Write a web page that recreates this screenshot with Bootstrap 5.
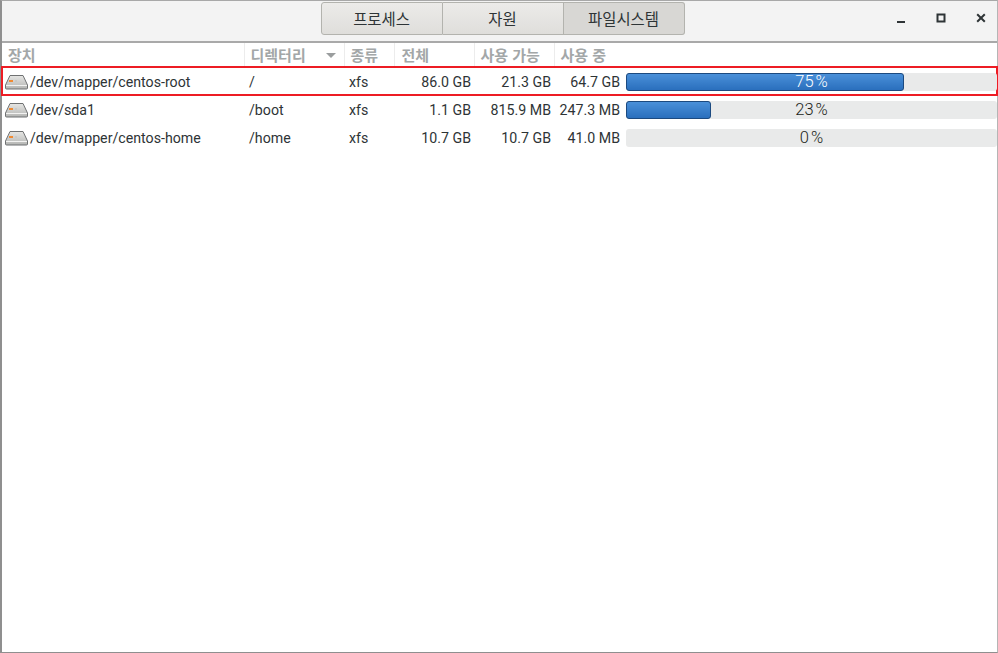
<!DOCTYPE html>
<html lang="ko">
<head>
    <meta charset="UTF-8">
    <meta name="viewport" content="width=device-width, initial-scale=1.0">
    <title>시스템 감시</title>
    <link href="https://cdn.jsdelivr.net/npm/bootstrap@5.3.0/dist/css/bootstrap.min.css" rel="stylesheet">
    <style>
        html, body { height: 100%; overflow: hidden; }
        body { font-family: "Roboto", "Noto Sans CJK KR", sans-serif; font-size: 14.2px; color: #2e3436; background: #fff; }
        .app-window { height: 653px; border: 1px solid #a8a8a8; border-left: 2px solid #8f8f8f; border-right-color: #b5b5b5; border-bottom-color: #8f8f8f; }
        .title-bar { height: 42px; background: #f3f3f3; border-bottom: 2px solid #a9a9a9; padding-top: 1px; padding-left: 6px; }
        .tab-group { width: 364px; height: 33px; }
        .tab-item { flex: 1 1 0; border: 1px solid #b3b3ae; border-radius: 0; background: linear-gradient(#ecebe9, #dfdedb); color: #2e3436; font-family: "Noto Sans CJK KR", sans-serif; font-size: 15.4px; line-height: 1; padding: 0; }
        .tab-item + .tab-item { border-left: 0; }
        .tab-item:first-child { border-radius: 3px 0 0 3px; }
        .tab-item:last-child { border-radius: 0 3px 3px 0; }
        .tab-item.is-on { background: #d8d7d4; }
        .win-btns { right: -4px; top: 4px; }
        .win-btn { width: 40px; height: 24px; background: none; border: 0; padding: 0; }
        .disk-table { table-layout: fixed; width: 100%; border-collapse: collapse; }
        .disk-table th { height: 24px; padding: 0 0 0 6px; font-family: "Noto Sans CJK KR", sans-serif; font-weight: 700; font-size: 15px; color: #a3a7a8; border-right: 1px solid #ececec; white-space: nowrap; }
        .disk-table th.th-total { padding-left: 7px; }
        .disk-table th.th-plain { border-right: 0; }
        .disk-table td { height: 28px; padding: 4px 3px 0 5px; white-space: nowrap; vertical-align: middle; }
        .disk-table td.num { text-align: right; }
        .disk-table td.num-last { padding-right: 4px; }
        .disk-table td.dev-cell { padding-left: 4px; }
        .disk-table td.bar-cell { padding: 2px 0 0 2px; }
        .sel-row { outline: 2px solid #ed1c24; outline-offset: -1px; }
        .dev-icon { width: 23px; height: 16px; margin: 0 2px 0 -1px; vertical-align: -3px; }
        .sort-mark { width: 0; height: 0; border-left: 5px solid transparent; border-right: 5px solid transparent; border-top: 5px solid #9a9d9e; }
        .use-track { height: 18px; background: #e9eaea; border-radius: 3px; }
        .use-fill { height: 18px; background: linear-gradient(#4a90d9, #2a6fbd); border: 1px solid #1c4a80; border-radius: 3px; }
        .use-label { left: 0; right: 0; top: 0; line-height: 18px; text-align: center; font-weight: 300; font-size: 16.5px; word-spacing: -2px; color: #1c1f20; }
        .use-label.on-fill { color: #fff; }
    </style>
</head>
<body>
    <div class="app-window d-flex flex-column">
        <div class="title-bar position-relative d-flex justify-content-center align-items-start flex-shrink-0">
            <div class="tab-group d-flex" role="group">
                <button type="button" class="btn tab-item">프로세스</button>
                <button type="button" class="btn tab-item">자원</button>
                <button type="button" class="btn tab-item is-on">파일시스템</button>
            </div>
            <div class="win-btns position-absolute d-flex">
                <button type="button" class="win-btn" aria-label="최소화">
                    <svg width="10" height="10" viewBox="0 0 10 10"><rect x="1" y="8" width="8" height="2" fill="#2e3436"/></svg>
                </button>
                <button type="button" class="win-btn" aria-label="최대화">
                    <svg width="10" height="10" viewBox="0 0 10 10"><rect x="1.5" y="1.5" width="7" height="7" fill="none" stroke="#2e3436" stroke-width="2"/></svg>
                </button>
                <button type="button" class="win-btn" aria-label="닫기">
                    <svg width="10" height="10" viewBox="0 0 10 10"><path d="M1.2 1.2l7.6 7.6M8.8 1.2l-7.6 7.6" stroke="#2e3436" stroke-width="2"/></svg>
                </button>
            </div>
        </div>

        <table class="disk-table">
            <colgroup>
                <col style="width:242px"><col style="width:100px"><col style="width:50px"><col style="width:80px"><col style="width:80px"><col style="width:70px"><col>
            </colgroup>
            <thead>
                <tr>
                    <th>장치</th>
                    <th><div class="d-flex align-items-center justify-content-between pe-2">디렉터리<span class="sort-mark"></span></div></th>
                    <th>종류</th>
                    <th class="th-total">전체</th>
                    <th>사용 가능</th>
                    <th class="th-plain">사용 중</th>
                    <th class="th-plain"></th>
                </tr>
            </thead>
            <tbody id="diskRows"></tbody>
        </table>
    </div>

    <script>
        const disks = [
            { dev: "/dev/mapper/centos-root", dir: "/", type: "xfs", total: "86.0 GB", free: "21.3 GB", used: "64.7 GB", pct: 75 },
            { dev: "/dev/sda1", dir: "/boot", type: "xfs", total: "1.1 GB", free: "815.9 MB", used: "247.3 MB", pct: 23 },
            { dev: "/dev/mapper/centos-home", dir: "/home", type: "xfs", total: "10.7 GB", free: "10.7 GB", used: "41.0 MB", pct: 0 },
        ];

        const driveIcon = `<svg class="dev-icon" viewBox="0 0 23 16">
            <defs><linearGradient id="driveBody" x1="0" y1="0" x2="0" y2="1"><stop offset="0" stop-color="#e6e6e4"/><stop offset="1" stop-color="#b4b5b3"/></linearGradient></defs>
            <path d="M5 1.5h13l4.5 9.5v3a1 1 0 0 1-1 1h-20a1 1 0 0 1-1-1v-3z" fill="url(#driveBody)" stroke="#6f7172"/>
            <path d="M1 11.5h21" stroke="#f2f2f1"/>
            <rect x="4" y="6" width="4" height="2" fill="#f08a32"/>
            <rect x="10" y="6" width="2" height="2" fill="#c9c9c7"/>
        </svg>`;

        const rows = document.getElementById("diskRows");
        disks.forEach((d, i) => {
            const row = document.createElement("tr");
            if (i === 0) row.classList.add("sel-row");
            const fill = d.pct ? `<div class="use-fill" style="width:${d.pct}%"></div>` : "";
            row.innerHTML = `
                <td class="dev-cell">${driveIcon}${d.dev}</td>
                <td>${d.dir}</td>
                <td>${d.type}</td>
                <td class="num">${d.total}</td>
                <td class="num">${d.free}</td>
                <td class="num num-last">${d.used}</td>
                <td class="bar-cell"><div class="use-track position-relative">${fill}<span class="use-label position-absolute ${d.pct > 50 ? "on-fill" : ""}">${d.pct} %</span></div></td>`;
            rows.appendChild(row);
        });
    </script>
    <script src="https://cdn.jsdelivr.net/npm/bootstrap@5.3.0/dist/js/bootstrap.bundle.min.js"></script>
</body>
</html>
